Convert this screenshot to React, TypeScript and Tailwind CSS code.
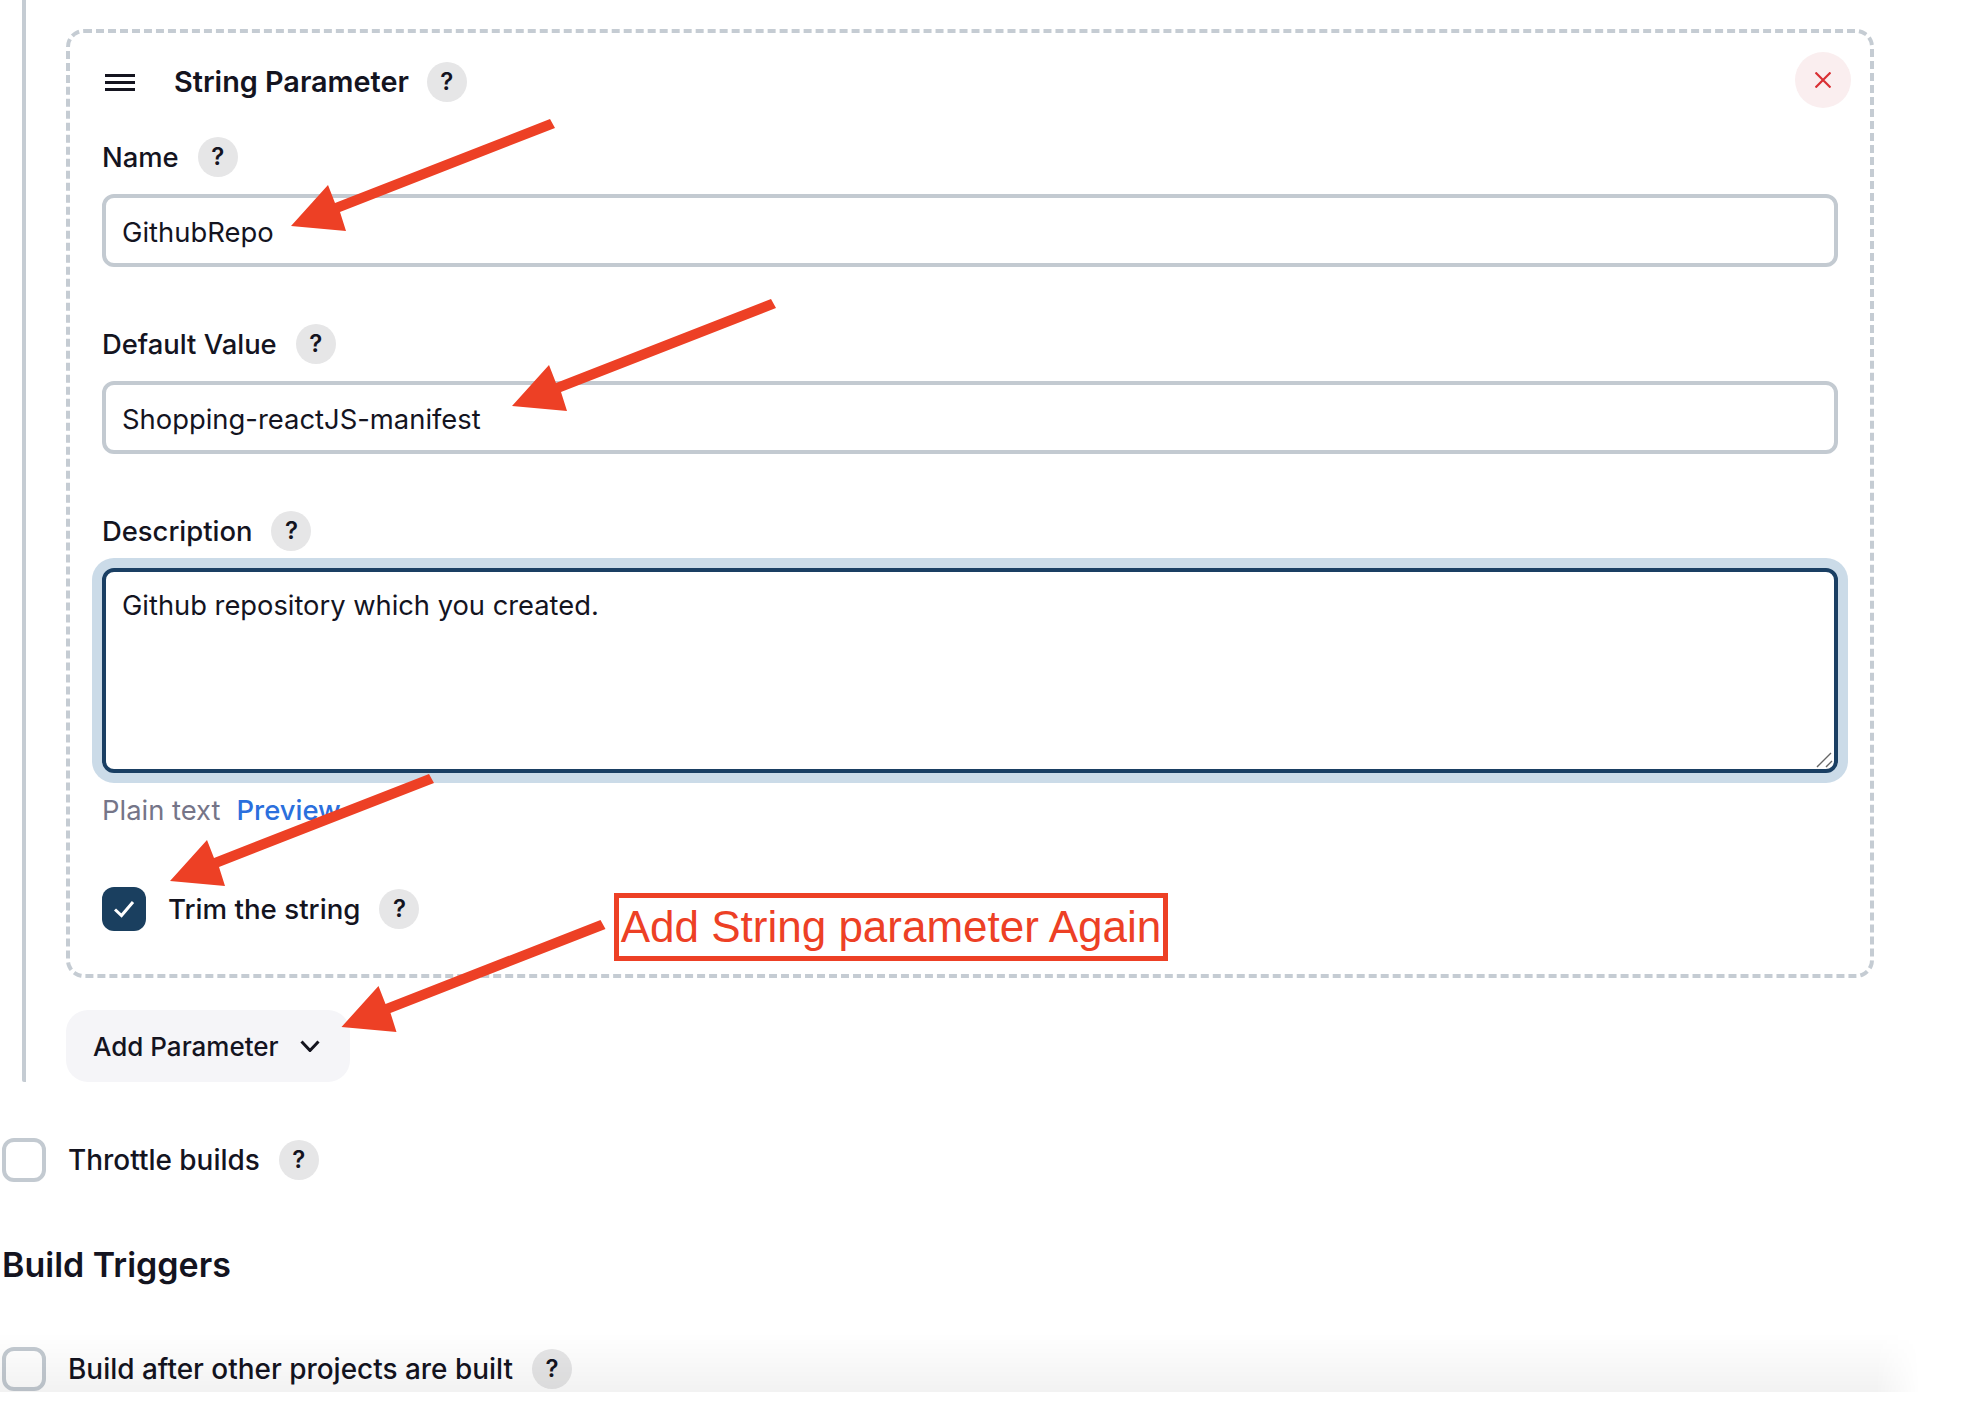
import React from "react";

const RED = "#ed4025";

function Help({ className = "" }: { className?: string }) {
  return (
    <span className={`flex h-[40px] w-[40px] shrink-0 items-center justify-center rounded-full bg-[#e6e6e7] text-[24px] font-semibold text-[#14141f] ${className}`}>
      ?
    </span>
  );
}

function Label({ text, className = "" }: { text: string; className?: string }) {
  return (
    <div className={`flex h-[40px] items-center gap-[19px] text-[27.4px] font-[450] leading-none ${className}`}>
      <span className="pt-[1px]">{text}</span>
      <Help />
    </div>
  );
}

function TextInput({ value, className = "" }: { value: string; className?: string }) {
  return (
    <input
      readOnly
      value={value}
      className={`block h-[73px] w-[1736px] rounded-[12px] border-4 border-[#c3cad1] bg-white pl-[16px] pr-[17px] pt-[2px] text-[27.4px] text-[#14141f] outline-none ${className}`}
    />
  );
}

function CheckRow({ text, className = "" }: { text: string; className?: string }) {
  return (
    <div className={`flex h-[44px] items-center text-[27.95px] font-[450] ${className}`}>
      <span className="mr-[22px] h-[44px] w-[44px] shrink-0 rounded-[12px] border-4 border-[#c3cad1] bg-white" />
      <span className="mr-[19px] pt-[1px]">{text}</span>
      <Help />
    </div>
  );
}

const ARROW = "550,119 555,128 340,212 346,231 291,226 328,185 335,203";

export default function App() {
  return (
    <div className="relative h-[1418px] w-[1978px] overflow-hidden bg-white [font-family:Inter,sans-serif] text-[#14141f]">
      {/* parameter block with its left rule */}
      <div className="ml-[22px] h-[1082px] w-fit rounded-b-[2px] border-l-4 border-[#c5ccd3] pl-[40px] pt-[29px]">
        <div className="relative h-[949px] w-[1808px] rounded-[18px] border-4 border-dashed border-[#c5ccd3] pl-[32px] pt-[29px]">
          <div className="flex h-[40px] items-center">
            <svg width="30" height="17" viewBox="0 0 30 17" className="ml-[3px] mr-[39px]">
              <rect y="0" width="30" height="3" fill="#14141f" />
              <rect y="7" width="30" height="3" fill="#14141f" />
              <rect y="14" width="30" height="3" fill="#14141f" />
            </svg>
            <span className="mr-[18px] text-[28.8px] font-semibold leading-none">String Parameter</span>
            <Help />
          </div>
          <button className="absolute right-[19px] top-[19px] flex h-[56px] w-[56px] items-center justify-center rounded-full bg-[#faeeef]">
            <svg width="16" height="16" viewBox="0 0 16 16">
              <path d="M0.5 0.5 L15.5 15.5 M15.5 0.5 L0.5 15.5" stroke="#d93034" strokeWidth="2.2" />
            </svg>
          </button>

          <Label text="Name" className="mt-[35px]" />
          <TextInput value="GithubRepo" className="mt-[17px]" />
          <Label text="Default Value" className="mt-[57px]" />
          <TextInput value="Shopping-reactJS-manifest" className="mt-[17px]" />
          <Label text="Description" className="mt-[57px]" />

          <div className="relative mt-[17px] h-[205px] w-[1736px]">
            <textarea
              readOnly
              value="Github repository which you created."
              className="block h-full w-full resize-none rounded-[12px] border-4 border-[#1a3f63] bg-white pl-[16px] pr-[17px] pt-[18px] text-[27.3px] leading-[32px] text-[#14141f] outline-none ring-[10px] ring-[#cbdbe8]"
            />
            <svg width="18" height="18" viewBox="0 0 18 18" className="absolute bottom-[4px] right-[4px]">
              <path d="M1 16 L15 2 M10 16 L16 10" stroke="#666" strokeWidth="1.4" />
            </svg>
          </div>

          <div className="mt-[22px] flex h-[32px] items-center gap-[16px] text-[27.4px] leading-none">
            <span className="text-[#757588]">Plain text</span>
            <span className="font-[450] text-[#2b6fdd]">Preview</span>
          </div>

          <div className="mt-[60px] flex h-[44px] items-center text-[27.7px] font-[450]">
            <span className="mr-[22px] flex h-[44px] w-[44px] shrink-0 items-center justify-center rounded-[12px] bg-[#1a3f5f]">
              <svg width="22" height="18" viewBox="0 0 22 18">
                <path d="M2 9.5 L8.5 15.5 L20 2" fill="none" stroke="#fff" strokeWidth="3" />
              </svg>
            </span>
            <span className="mr-[19px] pt-[1px]">Trim the string</span>
            <Help />
          </div>
        </div>

        <button className="mt-[32px] flex h-[72px] w-[284px] items-center rounded-[22px] bg-[#f5f5f8] pl-[27px] text-[26px] font-[450]">
          <span className="pt-[1px]">Add Parameter</span>
          <svg width="20" height="12" viewBox="0 0 20 12" className="ml-[21px]">
            <path d="M1.5 1.5 L10 10.5 L18.5 1.5" fill="none" stroke="#14141f" strokeWidth="3" />
          </svg>
        </button>
      </div>

      <CheckRow text="Throttle builds" className="ml-[2px] mt-[56px]" />
      <h2 className="ml-[2px] mt-[61px] text-[34px] font-semibold leading-[44px]">Build Triggers</h2>
      <CheckRow text="Build after other projects are built" className="ml-[2px] mt-[60px]" />

      {/* bottom bar shadow */}
      <div className="pointer-events-none absolute left-0 top-[1333px] h-[59px] w-[1920px] bg-gradient-to-b from-transparent to-[#0000000d] [mask-image:linear-gradient(to_right,black_1876px,transparent_1920px)]" />

      {/* annotations */}
      <svg width="1978" height="1418" className="pointer-events-none absolute left-0 top-0">
        <polygon points={ARROW} fill={RED} />
        <polygon points={ARROW} fill={RED} transform="translate(221 180)" />
        <polygon points={ARROW} fill={RED} transform="translate(-121 655)" />
        <polygon points={ARROW} fill={RED} transform="translate(50.5 801)" />
      </svg>
      <div className="absolute left-[614px] top-[893px] flex h-[68px] w-[554px] items-center justify-center whitespace-nowrap border-[5px] border-[#ed4025] [font-family:'Liberation_Sans',sans-serif] text-[44px] leading-none text-[#ed4025]">
        Add String parameter Again
      </div>
    </div>
  );
}
